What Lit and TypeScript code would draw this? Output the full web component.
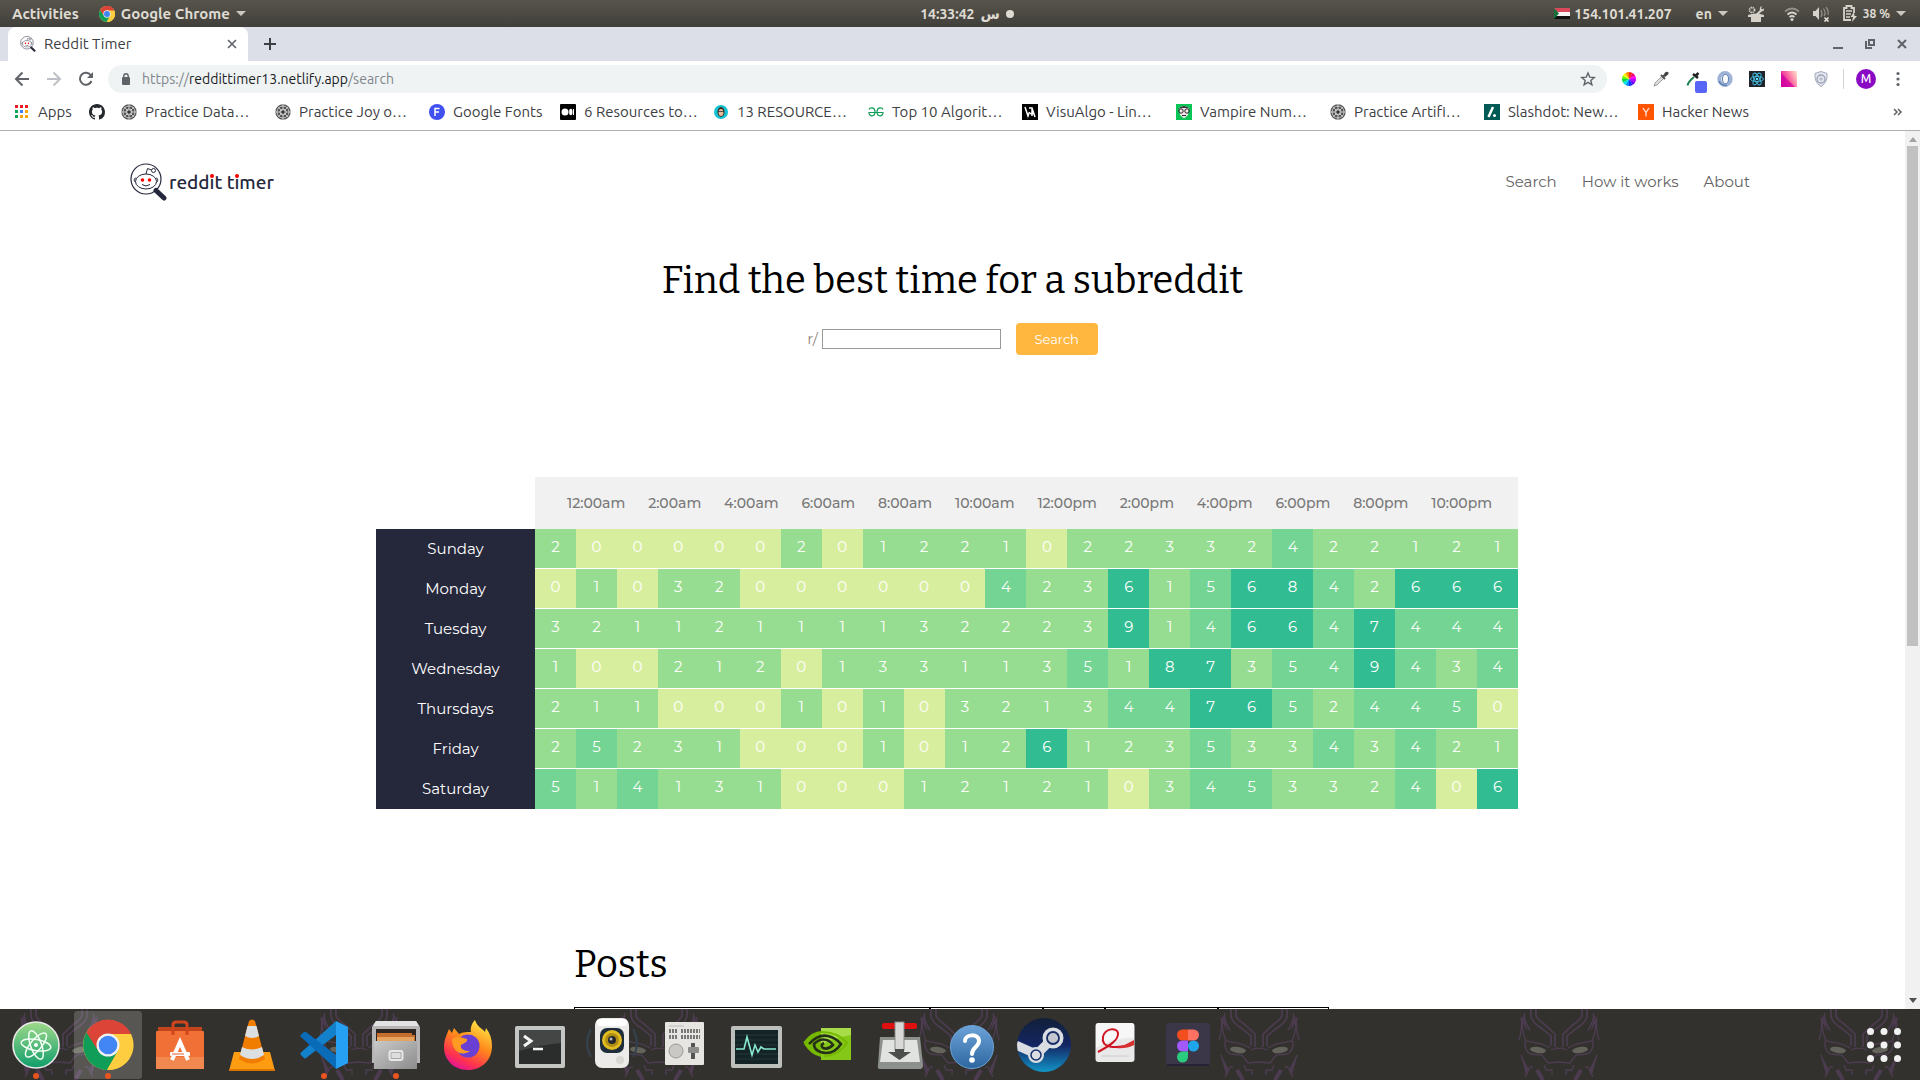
import { LitElement, html, svg, css, TemplateResult } from "lit";
import { customElement, property } from "lit/decorators.js";

const icon = (w: number, h: number, body: TemplateResult, box = `0 0 ${w} ${h}`) =>
  html`<svg width=${w} height=${h} viewBox=${box} aria-hidden="true">${body}</svg>`;

/* ---------- shared artwork ---------- */

const chromeLogo = svg`
  <circle cx="25" cy="25" r="25" fill="#ffcd40"/>
  <path d="M4.500 11 A25 25 0 0 0 24 50 L35 31 L25 25 L14 28Z" fill="#0f9d58"/>
  <path d="M24 50 A25 25 0 0 0 48 14 L25 14 L35.500 30Z" fill="#ffcd40"/>
  <path d="M3.500 12.500 A25 25 0 0 1 48 14 L25 14 L14 29Z" fill="#db4437"/>
  <circle cx="25" cy="25" r="11.500" fill="#f1f1f1"/>
  <circle cx="25" cy="25" r="9.300" fill="#4285f4"/>`;

const alien = svg`
  <g fill="none" stroke="#25283c" stroke-width="1">
    <ellipse cx="16" cy="18.500" rx="10.500" ry="7.500"/>
    <path d="M6.500 15.500 C4 14 3.500 18 5.500 19.500 M25.500 15.500 C28 14 28.500 18 26.500 19.500"/>
    <path d="M16 11 L17.500 5.500 L21.500 7"/>
    <circle cx="23.500" cy="7.500" r="2"/>
    <path d="M12 21.500 Q16 24.500 20 21.500"/>
  </g>
  <circle cx="12.500" cy="17" r="1.800" fill="#fe0000"/>
  <circle cx="19.500" cy="17" r="1.800" fill="#fe0000"/>`;

const magnifier = svg`
  <circle cx="16" cy="16" r="15" fill="#fff" stroke="#25283c" stroke-width="1.200"/>
  ${alien}
  <path d="M26 27.500 L34 35" stroke="#25283c" stroke-width="5" stroke-linecap="round"/>`;

/* ---------- bookmarks ---------- */

const acm = svg`
  <circle cx="8" cy="8" r="7.700" fill="#555"/>
  <g fill="none" stroke="#ddd" stroke-width="0.800">
    <circle cx="8" cy="8" r="6"/><circle cx="8" cy="8" r="3"/>
    <path d="M8 0 V16 M0 8 H16 M2.500 2.500 L13.500 13.500 M13.500 2.500 L2.500 13.500"/>
  </g><circle cx="8" cy="8" r="1.500" fill="#333"/>`;

const github = svg`<path fill="#24292e" fill-rule="evenodd" d="M8 0C3.580 0 0 3.580 0 8c0 3.540 2.290 6.530 5.470 7.590.4.070.55-.17.55-.38 0-.19-.01-.82-.01-1.490-2.010.37-2.530-.49-2.690-.94-.09-.23-.48-.94-.82-1.130-.28-.15-.68-.52-.01-.53.63-.01 1.080.58 1.230.82.72 1.210 1.870.87 2.330.66.070-.52.28-.87.51-1.070-1.780-.2-3.640-.89-3.640-3.950 0-.87.31-1.590.82-2.150-.08-.2-.36-1.020.08-2.120 0 0 .67-.21 2.200.82.64-.18 1.320-.27 2-.27s1.360.09 2 .27c1.530-1.040 2.200-.82 2.200-.82.44 1.100.16 1.920.08 2.120.51.56.82 1.270.82 2.150 0 3.070-1.870 3.750-3.650 3.950.29.25.54.73.54 1.480 0 1.070-.01 1.930-.01 2.200 0 .21.15.46.55.38A8.010 8.010 0 0 0 16 8c0-4.420-3.580-8-8-8z"/>`;

const apps = svg`${["#ea1b23", "#ea1b23", "#ea1b23", "#10a457", "#3f7ff5", "#f7a70b", "#10a457", "#f7a70b", "#f7a70b"].map(
  (c, i) => svg`<rect x=${(i % 3) * 5} y=${1 + Math.floor(i / 3) * 5} width="3" height="3" fill=${c}/>`)}`;

const bookmarks: { label: string; size: string; art: TemplateResult }[] = [
  { label: "Apps", size: "short", art: apps },
  { label: "", size: "bare", art: github },
  { label: "Practice Data…", size: "long", art: acm },
  { label: "Practice Joy o…", size: "long", art: acm },
  { label: "Google Fonts", size: "medium", art: svg`<circle cx="8" cy="8" r="8" fill="#4150f0"/><path d="M6 12 V4.500 H10.500 M6 8 H10" fill="none" stroke="#fff" stroke-width="1.500"/>` },
  { label: "6 Resources to…", size: "long", art: svg`<rect width="16" height="16" rx="1" fill="#000"/><circle cx="5" cy="8" r="3.500" fill="#fff"/><ellipse cx="10.800" cy="8" rx="1.700" ry="3.300" fill="#fff"/><rect x="13" y="5" width="1" height="6" fill="#fff"/>` },
  { label: "13 RESOURCE…", size: "long", art: svg`<circle cx="7" cy="8" r="7" fill="#13c3d3"/><ellipse cx="7" cy="8" rx="3.500" ry="5" fill="#3c3028"/><ellipse cx="7" cy="8.500" rx="2.400" ry="3.500" fill="#e3bd9d"/><path d="M4 7.500H10" stroke="#333" stroke-width="0.800"/>` },
  { label: "Top 10 Algorit…", size: "long", art: svg`<g fill="none" stroke="#0f9d58" stroke-width="1.200"><path d="M1 5.500 C2 3 7 3 7 8 C7 13 1 13 1 8.500 H15 C15 13 9 13 9 8 C9 3 14 3 15 5.500"/></g>` },
  { label: "VisuAlgo - Lin…", size: "long", art: svg`<rect width="16" height="16" fill="#000"/><path d="M3 3 L6 12 L7.500 8 M7 4 H10 L13 13 M10 4 V12 M8 9.500 H12" fill="none" stroke="#fff" stroke-width="1.500"/>` },
  { label: "Vampire Num…", size: "long", art: svg`<rect width="16" height="16" fill="#07c557"/><path d="M3 4 Q8 0 13 4 L12 11 L8 14.500 L4 11Z" fill="#f4e9ec"/><path d="M2 5 Q8 -1 14 5 L11.500 4 H5Z" fill="#333"/><g fill="none" stroke="#222"><circle cx="5" cy="7" r="2.200"/><circle cx="11" cy="7" r="2.200"/><path d="M6 11.500H10"/></g>` },
  { label: "Practice Artifi…", size: "long", art: acm },
  { label: "Slashdot: New…", size: "long", art: svg`<rect width="16" height="16" fill="#015a55"/><path d="M9 3 L4.500 13" stroke="#fff" stroke-width="2.500"/><circle cx="10.500" cy="11.500" r="1.500" fill="#fff"/>` },
  { label: "Hacker News", size: "long", art: svg`<rect width="16" height="16" fill="#ff5500"/><path d="M5 4 L8 8.500 L11 4 M8 8.500 V12.500" fill="none" stroke="#ffe4d4" stroke-width="1.300"/>` },
];

/* ---------- browser extensions ---------- */

const hues = ["#f0f", "#f0006a", "#f22", "#ff8a00", "#fff200", "#6bff00", "#00d84a", "#00e5e5", "#008cff", "#1030ff", "#6a00ff", "#b400ff"];
const wheel = svg`${hues.map((_, i) => {
  const at = (k: number) => `${8 + 7 * Math.sin((k * Math.PI) / 6)} ${8 - 7 * Math.cos((k * Math.PI) / 6)}`;
  return svg`<path d=${`M8 8 L${at(i)} A7 7 0 0 1 ${at(i + 1)}Z`} fill=${hues[(14 - i) % 12]}/>`;
})}`;

const extensions: { name: string; art: TemplateResult }[] = [
  { name: "Colour wheel", art: wheel },
  { name: "Eyedropper", art: svg`<path d="M1 15 L2 12 L9 5 L11 7 L4 14Z" fill="#ddd" stroke="#888" stroke-width="0.800"/><path d="M8 4 L12 8 M10 5.500 L13.500 2.500" stroke="#555" stroke-width="2"/><path d="M10.500 4.500 L12 1.500 Q14 0 15.500 1.500 Q16 3 14.500 4 L12 6Z" fill="#444"/>` },
  { name: "Colour picker", art: svg`<path d="M2.500 14.500 Q3 11 9 6" fill="none" stroke="#1f8050" stroke-width="2"/><path d="M8 3 L13 7 M10 5.500 L13.500 2" stroke="#222" stroke-width="2.500"/><rect x="10" y="10" width="12" height="12" rx="2" fill="#5865f7"/>` },
  { name: "Ring", art: svg`<ellipse cx="8" cy="8" rx="5.700" ry="6" fill="none" stroke="#9db4d8" stroke-width="4"/><ellipse cx="8.500" cy="8" rx="3" ry="4.500" fill="#fff" stroke="#5f7eb0" stroke-width="1"/><path d="M2 10 Q4 15 10 14.500" fill="none" stroke="#6483b5" stroke-width="1.500"/>` },
  { name: "React", art: svg`<rect width="16" height="16" fill="#20232a"/><g fill="none" stroke="#3fb7d8" stroke-width="1"><ellipse cx="8" cy="8" rx="6.500" ry="2.600"/><ellipse cx="8" cy="8" rx="6.500" ry="2.600" transform="rotate(60 8 8)"/><ellipse cx="8" cy="8" rx="6.500" ry="2.600" transform="rotate(120 8 8)"/></g><circle cx="8" cy="8" r="1.300" fill="#61dafb"/>` },
  { name: "Gradient", art: svg`<defs><linearGradient id="pk" x1="0" y1="0.700" x2="1" y2="0.200"><stop offset="0" stop-color="#d1009c"/><stop offset="0.500" stop-color="#fb62a0"/><stop offset="1" stop-color="#ffd9c4"/></linearGradient></defs><rect width="16" height="16" fill="url(#pk)"/><path d="M0 2 L14 16 H0Z" fill="#d000a0" opacity="0.700"/>` },
  { name: "Shield", art: svg`<path d="M8 0.500 L14 2.500 Q15 11 8 15.500 Q1 11 2 2.500Z" fill="#e4e7ef" stroke="#a3a9ba"/><circle cx="8" cy="8" r="4" fill="none" stroke="#9ba3b8" stroke-width="1.300"/><circle cx="8" cy="8" r="1.700" fill="#b8bece"/>` },
];

/* ---------- dock ---------- */

const orbit = (a: number) => svg`<ellipse cx="24" cy="24" rx="15" ry="5.500" transform=${`rotate(${a} 24 24)`}/>`;

const dock: { name: string; running?: boolean; active?: boolean; art: TemplateResult }[] = [
  { name: "Atom", running: true, art: svg`
    <defs><linearGradient id="at" x1="0" y1="0" x2="0" y2="1"><stop offset="0" stop-color="#9fd98a"/><stop offset="1" stop-color="#0f9d6b"/></linearGradient></defs>
    <circle cx="24" cy="24" r="23" fill="url(#at)" stroke="#e8e8e8" stroke-width="1.600"/>
    <g fill="none" stroke="#f2fff4" stroke-width="1.500">${orbit(10)}${orbit(70)}${orbit(130)}</g><circle cx="24" cy="24" r="2" fill="#fff"/>` },
  { name: "Google Chrome", running: true, active: true, art: svg`<g transform="translate(-1 -1)">${chromeLogo}</g>` },
  { name: "Software", art: svg`
    <path d="M17 13 V4 Q17 1 20 1 H28 Q31 1 31 4 V13" fill="none" stroke="#d0451b" stroke-width="3"/>
    <path d="M2 6 H46 V12 H2Z" fill="#c2441d"/><rect x="0" y="10" width="48" height="38" rx="1" fill="#f07036"/><rect x="0" y="36" width="48" height="12" fill="#f08850"/>
    <path d="M17 6 V14 M31 6 V14" stroke="#d0451b" stroke-width="3"/>
    <path d="M16 39 L24 21 L32 39" fill="none" stroke="#fff" stroke-width="4"/><rect x="14" y="31" width="20" height="4" rx="1" fill="#fff"/><path d="M16 33H28" stroke="#e65f2a" stroke-width="1"/>` },
  { name: "VLC", art: svg`
    <path d="M6 31 H42 L47 50 H1Z" fill="#ff9c12"/><path d="M1 48H47V50H1Z" fill="#d97400"/>
    <path d="M11 38 Q24 47 37 38 L27 0 Q24 -3 21 0Z" fill="#f07c00"/>
    <path d="M19.500 5 H28.500 L31 15 Q24 19 17 15Z" fill="#dcdfe2"/><path d="M14 26 Q24 31 34 26 L36 34 Q24 42 12 34Z" fill="#dcdfe2"/>` },
  { name: "Visual Studio Code", running: true, art: svg`
    <path d="M36 0 L36 14 L6 37 Q5 38 4 37 L0.500 33.500 Q0 32.500 1 31.500Z" fill="#1380cc"/>
    <path d="M36 48 V34 L6 11 Q5 10.500 4 11 L0.500 14 Q0 15 1 16Z" fill="#0a6bb8"/>
    <path d="M36 0 L48 6 V42 L36 48Z" fill="#26a0f2"/>` },
  { name: "Files", running: true, art: svg`
    <defs><linearGradient id="fl" x1="0" y1="0" x2="1" y2="1"><stop offset="0" stop-color="#c9c9c9"/><stop offset="1" stop-color="#8c8c8c"/></linearGradient></defs>
    <path d="M4 0 H44 L48 6 V42 H0 V6Z" fill="#b5b5b5"/><path d="M4 0 H44 L47 5 H1Z" fill="#e2e2e2"/><rect x="4" y="8" width="40" height="12" fill="#2b2420"/>
    <path d="M5 12 H40 V14 H43 V21 H5Z" fill="#c46f2e"/><path d="M5 16 H42 V21 H5Z" fill="#e5a35f"/>
    <rect x="2" y="20" width="43" height="28" fill="url(#fl)"/><rect x="17.500" y="30" width="13" height="9" rx="2" fill="none" stroke="#e8e8e8" stroke-width="2"/><rect x="19.500" y="32" width="9" height="5" fill="#ddd"/>` },
  { name: "Firefox", art: svg`
    <defs><linearGradient id="ff" x1="0.800" y1="0" x2="0.300" y2="1"><stop offset="0" stop-color="#fff04a"/><stop offset="0.450" stop-color="#ff8a1a"/><stop offset="0.800" stop-color="#ff3150"/><stop offset="1" stop-color="#e0139a"/></linearGradient></defs>
    <path d="M24 49 C9 49 0 38 0 26 C0 19 3 13 5 8 L8 12 L10 7 L15 13 C19 11 23 11 27 11 C26 7 28 2 31 -1 C33 6 38 7 41 11 L42 7 C46 12 48 18 48 25 C48 39 38 49 24 49Z" fill="url(#ff)"/>
    <circle cx="24" cy="25" r="11.500" fill="#6a3fd4"/>
    <path d="M8 18 C13 14 19 17 23 18 C24 21 20 22 17 24 C16 28 20 30 26 30 C20 35 8 33 8 18Z" fill="#ff9a22"/>` },
  { name: "Terminal", art: svg`
    <rect x="-1" y="5" width="50" height="42" rx="2" fill="#c4c6c4"/><rect x="3" y="9" width="42" height="34" fill="#2b2d2c"/><path d="M3 9H45V22Q24 24 3 30Z" fill="#434645"/>
    <path d="M8 15 L15 20 L8 25" fill="none" stroke="#f4f4f4" stroke-width="3"/><path d="M17 28H27" stroke="#f4f4f4" stroke-width="2.500"/>` },
  { name: "Rhythmbox", art: svg`
    <path d="M3 8 Q-5 22 3 36 M45 8 Q53 22 45 36" fill="none" stroke="#34424f" stroke-width="2"/>
    <rect x="7" y="-3" width="34" height="50" rx="7" fill="#ecebe9"/><rect x="9" y="-2" width="30" height="7" rx="3" fill="#fff"/>
    <rect x="12" y="7" width="24" height="25" rx="7" fill="#1f2c3c"/><circle cx="24" cy="19" r="10" fill="#e0bb22"/><circle cx="24" cy="19" r="7" fill="#b08e14"/><circle cx="24" cy="19" r="4" fill="#24262c"/><circle cx="23" cy="18" r="1.500" fill="#bbb"/><circle cx="32" cy="39" r="4" fill="#d9d7d4"/>` },
  { name: "Tweaks", art: svg`
    <rect x="5" y="1" width="39" height="43" rx="1" fill="#e6e5e1"/><path d="M9 5H24" stroke="#bbb"/>
    <path d="M9 10H17M21 10H40M9 16H17M21 16H40" stroke="#777" stroke-width="4" stroke-dasharray="2 1"/>
    <circle cx="16" cy="30" r="7" fill="#c9c8c4" stroke="#9b9a96"/><path d="M33 22V38" stroke="#555" stroke-width="4"/><rect x="28" y="26" width="11" height="6" rx="1" fill="#8d8d8b"/>` },
  { name: "System Monitor", art: svg`
    <rect x="-1" y="5" width="51" height="42" rx="2" fill="#bdbfbd"/><rect x="3" y="9" width="43" height="34" fill="#142326"/>
    <path d="M3 14H46M3 19H46M3 24H46M3 33H46M3 38H46" stroke="#24383c"/>
    <path d="M4 28 H12 L15 16 L20 34 L23 24 L26 31 L29 26 L32 28 H44" fill="none" stroke="#86e8cf" stroke-width="1.600"/>` },
  { name: "NVIDIA", art: svg`
    <rect x="17" y="7" width="30" height="32" fill="#85c818"/><path d="M17 7H47V14Q32 16 17 24Z" fill="#a8dd4a"/>
    <path d="M0 23 Q8 11 17 11 V36 Q7 34 0 23Z" fill="#76b900"/><path d="M17 7V39" stroke="#33312d" stroke-width="0"/>
    <path d="M0 22 Q8 11 18 11 Q34 11 43 22 Q34 35 20 35" fill="none" stroke="#76b900" stroke-width="2"/>
    <path d="M5 23 Q14 13 24 15 Q32 17 37 23 Q31 32 22 32 Q10 31 10 23 Q17 16 25 20 Q28 22 29 24 Q24 29 19 27 Q16 24 20 22" fill="none" stroke="#253018" stroke-width="2.600"/>` },
  { name: "Transmission", art: svg`
    <path d="M4 16 H44 L47 44 Q47 48 44 48 H4 Q1 48 2 44Z" fill="#8d918d"/><path d="M7 19 H41 L44 41 H4Z" fill="#e1e3e1"/>
    <rect x="6" y="2" width="35" height="6" rx="2" fill="#e01010"/><rect x="19" y="1" width="9" height="28" fill="#d9dad8" stroke="#8a8c8a"/>
    <path d="M12 31 L23.500 39 L35 31 H28 V28 H19 V31Z" fill="#4b4e4b"/>` },
  { name: "Help", art: svg`
    <defs><linearGradient id="hp" x1="0" y1="0" x2="0" y2="1"><stop offset="0" stop-color="#6ca2d8"/><stop offset="1" stop-color="#2d679f"/></linearGradient></defs>
    <circle cx="24" cy="26" r="21.500" fill="url(#hp)" stroke="#6aa3d6"/>
    <path d="M17 20 C17 13 31 12 31 20 C31 26 24 26 24 33" fill="none" stroke="#fff" stroke-width="4" stroke-linecap="round"/><circle cx="24" cy="39" r="2.800" fill="#fff"/>` },
  { name: "Steam", art: svg`
    <defs><linearGradient id="st" x1="0" y1="0" x2="0" y2="1"><stop offset="0" stop-color="#122038"/><stop offset="0.500" stop-color="#132563"/><stop offset="1" stop-color="#1295c8"/></linearGradient><clipPath id="stc"><circle cx="24" cy="24" r="27"/></clipPath></defs>
    <circle cx="24" cy="24" r="27" fill="url(#st)"/>
    <g clip-path="url(#stc)"><path d="M-4 24 L16 33" stroke="#dadde2" stroke-width="9"/><path d="M33 17 L16 34" stroke="#dadde2" stroke-width="9"/><circle cx="33" cy="17" r="10.500" fill="#dadde2"/><circle cx="33" cy="17" r="6" fill="#c4c7cf" stroke="#182c66" stroke-width="1.800"/><circle cx="16" cy="34" r="8" fill="#dadde2"/><circle cx="16" cy="34" r="5" fill="none" stroke="#17306c" stroke-width="1.500"/></g>` },
  { name: "Document Viewer", art: svg`
    <rect x="3.500" y="2" width="39" height="39" rx="3" fill="#e9e9e9"/><path d="M4 5Q4 2 7 2H39Q42 2 42 5V17Q24 15 4 27Z" fill="#f7f7f7"/><path d="M9 35H37" stroke="#ccc"/>
    <path d="M6 31 C17 25 27 19 26 12 C25 6 13 7 11 16 C9 26 21 29 41 23" fill="none" stroke="#d01522" stroke-width="2"/><path d="M24 27 Q34 24 42 19 V24 Q34 28 24 27Z" fill="#d83030"/>` },
  { name: "Figma", art: svg`
    <rect x="2" y="2" width="44" height="43" rx="3" fill="#3c3748"/><rect x="3" y="43" width="42" height="2" fill="#272233"/>
    <path d="M24 8.500H18.500a5.500 5.500 0 0 0 0 11H24Z" fill="#f24e1e"/><path d="M24 8.500H29.500a5.500 5.500 0 0 1 0 11H24Z" fill="#ff7262"/>
    <path d="M24 19.500H18.500a5.500 5.500 0 0 0 0 11H24Z" fill="#a259ff"/><circle cx="29.500" cy="25" r="5.500" fill="#1fa5ea"/><path d="M24 30.500H18.500a5.500 5.500 0 1 0 5.500 5.500Z" fill="#29cc7f"/>` },
];

const maskHalf = svg`
  <path d="M-28 0 V8 Q-26 14 -18 19 L-8 27 V37 M-23 0 V7 Q-21 11 -15 15 L-4 25 V38" stroke-width="1.600"/>
  <path d="M-38 8 Q-36 18 -40 31 M-34 4 Q-40 16 -33 32 L-17 35 L-9 39 M-35 6 Q-33 16 -29 21"/>
  <path d="M-34 32 Q-35 42 -28 45 L-17 46 L-11 54 L0 53 M-8 41 L-2 39 L0 40"/>
  <path d="M-38 46 Q-35 56 -31 63 L-34 68 M-31 63 Q-30 57 -26 58 M-15 56 L-13 61 L-7 61 V66"/>
  <path d="M-38 46 L-31 59 L-33 66Z M-35 8 L-32 22 L-36 14Z" fill="#4c3b51" stroke="none"/>
  <path d="M-22 61 L-16 71" stroke-width="4"/>
  <ellipse cx="-21" cy="41" rx="8" ry="3" fill="#65645c" stroke="none" transform="rotate(8 -21 41)"/>`;

/* ---------- elements ---------- */

@customElement("system-bar")
export class SystemBar extends LitElement {
  static styles = css`
    :host { display: block; font: 600 14px/20px Ubuntu, "Noto Sans", "DejaVu Sans", sans-serif; color: #dfdbd2; }
    .bar { display: grid; grid-template-columns: 1fr auto 1fr; align-items: center; height: 27px; padding: 0 14px 0 12px; background: linear-gradient(#57544c, #413f3a); }
    .group { display: flex; align-items: center; gap: 6px; }
    .left { gap: 20px; font-size: 15px; }
    .center { padding-left: 16px; }
    .right { justify-content: flex-end; gap: 20px; }
    .tray { gap: 13px; }
    .dot { width: 8px; height: 8px; border-radius: 50%; background: #dfdbd2; }
    .address { gap: 4px; margin-right: 4px; }
    .small { font-size: 12px; }
    button { display: flex; align-items: center; gap: 6px; padding: 0; border: 0; background: none; color: inherit; font: inherit; }
    svg { display: block; flex: none; }
  `;
  render() {
    const caret = icon(10, 6, svg`<path d="M0 0H10L5 5Z" fill="#ccc8c0"/>`);
    return html`<div class="bar">
      <div class="group left">
        <button>Activities</button>
        <button>${icon(16, 16, chromeLogo, "0 0 50 50")}Google Chrome ${caret}</button>
      </div>
      <div class="group center"><time>14:33:42</time><span lang="ar">س</span><span class="dot"></span></div>
      <div class="group right">
        <span class="group address">${icon(16, 11, svg`<rect width="16" height="4" fill="#d9495b"/><rect y="4" width="16" height="4" fill="#f3f3f3"/><rect y="8" width="16" height="3" fill="#111"/><path d="M0 0 L5 5.500 L0 11Z" fill="#15713a"/>`)}154.101.41.207</span>
        <button>en ${caret}</button>
        ${icon(16, 16, svg`<g fill="#d6d2ca"><path d="M0 9 Q8 6 16 9 V11 H13 V16 H3 V11 H0Z"/><circle cx="4" cy="4" r="2.500" fill="none" stroke="#d6d2ca" stroke-width="1.800" stroke-dasharray="1.300 0.700"/><path d="M8 8 L12 4 Q11 1 14 0 L13 2.500 L15 3.500 L16 2 Q17 5 13.500 5.500 L11 8Z"/></g>`)}
        <div class="group tray">
          ${icon(16, 14, svg`<g fill="none" stroke="#d6d2ca" stroke-width="1.800"><path d="M1 4.500 Q8 -1.500 15 4.500" opacity="0.500"/><path d="M3.500 7.500 Q8 3.500 12.500 7.500"/><path d="M5.500 10 Q8 8 10.500 10"/></g><circle cx="8" cy="12.500" r="1.500" fill="#d6d2ca"/>`)}
          ${icon(17, 16, svg`<path d="M0 5H2.500L6 1V14L2.500 10H0Z" fill="#d6d2ca"/><path d="M8 4Q10 7.500 8 11M10.500 2.500Q13.500 7 11 10M13 1Q16 5 15 9" fill="none" stroke="#8e8a82" stroke-width="1.300"/><path d="M11.500 11.500L15.500 15.500M15.500 11.500L11.500 15.500" stroke="#e8e4dc" stroke-width="1.600"/>`)}
          <button>${icon(14, 17, svg`<path d="M8 15H1V3H3.500V1H8.500V3H11V8" fill="none" stroke="#d6d2ca" stroke-width="1.800"/><path d="M3 6H9M3 9H8M3 12H7" stroke="#d6d2ca" stroke-width="1.500"/><path d="M11 7L7.500 12H10L9 17L14 11H11.500Z" fill="#d6d2ca"/>`)}<span class="small">38 %</span>${caret}</button>
        </div>
      </div>
    </div>`;
  }
}

@customElement("browser-chrome")
export class BrowserChrome extends LitElement {
  static styles = css`
    :host { display: block; font: 400 15px/20px Ubuntu, "Noto Sans", sans-serif; color: #3c4043; }
    svg { display: block; flex: none; overflow: visible; }
    button { display: grid; place-items: center; padding: 0; border: 0; background: none; color: inherit; }
    .strip { display: flex; height: 34px; padding-left: 8px; background: #dcdfe7; }
    .tab { display: flex; align-items: center; gap: 8px; width: 240px; padding: 0 12px; box-sizing: border-box; background: #fff; border-radius: 8px 8px 0 0; }
    .title { flex: 1; }
    .new { width: 44px; }
    .window { display: flex; gap: 22px; margin-left: auto; padding-right: 13px; }
    .toolbar { display: flex; align-items: center; height: 36px; background: #fff; }
    .arrows { display: flex; width: 108px; padding-left: 14px; box-sizing: border-box; gap: 16px; }
    .omnibox { flex: 1; display: flex; align-items: center; gap: 10px; height: 28px; padding: 0 12px; border-radius: 14px; background: #eff3f4; font-size: 14px; }
    .url { flex: 1; display: flex; color: #80868b; }
    .host { color: #202124; }
    .extensions { display: flex; align-items: center; gap: 16px; padding: 0 16px 0 14px; }
    .extensions .rule { width: 1px; height: 20px; background: #d0d3d8; margin: 0 -4px 0 -2px; }
    .avatar { width: 20px; height: 20px; border-radius: 50%; background: #8a0bc4; color: #fff; font: 500 12px/20px Ubuntu, "Noto Sans", sans-serif; }
    .bookmarks { display: flex; align-items: center; height: 29px; padding: 0 18px 4px 15px; background: #fff; border-bottom: 1px solid #b0b0b0; }
    .bookmark { display: flex; align-items: center; gap: 8px; box-sizing: border-box; color: inherit; text-decoration: none; white-space: nowrap; }
    .bare { width: 32px; } .short { width: 74px; } .medium { width: 131px; } .long { width: 154px; }
    .more { margin-left: auto; }
  `;
  render() {
    return html`
      <div class="strip">
        <div class="tab">${icon(16, 16, magnifier, "0 0 37 38")}<span class="title">Reddit Timer</span>
          <button aria-label="Close tab">${icon(8, 8, svg`<path d="M0 0L8 8M8 0L0 8" stroke="#5f6368" stroke-width="1.600"/>`)}</button></div>
        <button class="new" aria-label="New tab">${icon(12, 12, svg`<path d="M6 0V12M0 6H12" stroke="#3c4043" stroke-width="2"/>`)}</button>
        <div class="window">
          <button aria-label="Minimise">${icon(10, 10, svg`<path d="M0 9H10" stroke="#5f6368" stroke-width="2"/>`)}</button>
          <button aria-label="Restore">${icon(10, 10, svg`<path d="M4 1H9V6H4Z M1 2V9H7" fill="none" stroke="#5f6368" stroke-width="2"/>`)}</button>
          <button aria-label="Close">${icon(10, 10, svg`<path d="M1 1L9 9M9 1L1 9" stroke="#5f6368" stroke-width="2"/>`)}</button>
        </div>
      </div>
      <div class="toolbar">
        <div class="arrows">
          <button aria-label="Back">${icon(16, 16, svg`<path d="M15 8H2.500M8.500 1.500L2 8L8.500 14.500" fill="none" stroke="#5f6368" stroke-width="2"/>`)}</button>
          <button aria-label="Forward">${icon(16, 16, svg`<path d="M1 8H13.500M7.500 1.500L14 8L7.500 14.500" fill="none" stroke="#bdc1c6" stroke-width="2"/>`)}</button>
          <button aria-label="Reload">${icon(16, 16, svg`<path d="M13.500 10A6 6 0 1 1 13 4.500" fill="none" stroke="#5f6368" stroke-width="2"/><path d="M15 1V7H9Z" fill="#5f6368"/>`)}</button>
        </div>
        <div class="omnibox">
          ${icon(12, 12, svg`<rect x="2" y="4" width="8" height="8" rx="1" fill="#5f6368"/><path d="M3.800 5V3A2.200 2.200 0 0 1 8.200 3V5" fill="none" stroke="#5f6368" stroke-width="1.400"/>`)}
          <div class="url"><span>https://</span><span class="host">reddittimer13.netlify.app</span><span>/search</span></div>
          <button aria-label="Bookmark this page">${icon(14, 14, svg`<path d="M7 1L8.800 5.200L13.200 5.500L9.800 8.400L10.900 12.800L7 10.400L3.100 12.800L4.200 8.400L0.800 5.500L5.200 5.200Z" fill="none" stroke="#5f6368" stroke-width="1.400"/>`)}</button>
        </div>
        <div class="extensions">
          ${extensions.map((e) => html`<button aria-label=${e.name}>${icon(16, 16, e.art)}</button>`)}
          <span class="rule"></span>
          <button class="avatar">M</button>
          <button aria-label="Menu">${icon(12, 14, svg`<g fill="#5f6368"><circle cx="6" cy="1.500" r="1.600"/><circle cx="6" cy="7" r="1.600"/><circle cx="6" cy="12.500" r="1.600"/></g>`)}</button>
        </div>
      </div>
      <nav class="bookmarks">
        ${bookmarks.map((b) => html`<a class="bookmark ${b.size}" href="#">${icon(b.label === "13 RESOURCE…" || b.label === "Apps" ? 15 : 16, 16, b.art)}${b.label}</a>`)}
        <button class="more" aria-label="More bookmarks">${icon(9, 8, svg`<path d="M1 1L4 4L1 7M5 1L8 4L5 7" fill="none" stroke="#5f6368" stroke-width="1.500"/>`)}</button>
      </nav>`;
  }
}

const DAYS = ["Sunday", "Monday", "Tuesday", "Wednesday", "Thursdays", "Friday", "Saturday"];
const HOURS = ["12:00am", "2:00am", "4:00am", "6:00am", "8:00am", "10:00am", "12:00pm", "2:00pm", "4:00pm", "6:00pm", "8:00pm", "10:00pm"];
const COUNTS = [
  "200000201221022332422121",
  "010320000004236156842666",
  "321121111322239146647444",
  "100212013311351873549434",
  "211000101032134476524450",
  "252310001012612353343421",
  "514131000121210345332406",
];

@customElement("heat-map")
export class HeatMap extends LitElement {
  @property({ attribute: false }) counts: string[] = COUNTS;
  static styles = css`
    :host { display: block; font: 400 15px/20px Montserrat, Inter, "Liberation Sans", sans-serif; color: #fff; }
    table { width: 100%; border-collapse: separate; border-spacing: 0; table-layout: fixed; }
    th, td { padding: 0; font-weight: 400; text-align: center; }
    .corner { width: 159px; }
    .hours { height: 52px; background: #f1f1f1; }
    .scale { display: flex; justify-content: space-between; padding: 0 26px 0 32px; font-size: 14px; font-weight: 500; color: #787878; }
    .day { height: 40px; background: #25273b; }
    .cell { height: 35px; padding-bottom: 4px; border-bottom: 1px solid #fff; }
    tr:last-child .cell { padding-bottom: 5px; border-bottom: 0; }
    .l0 { background: #d8ee9f; } .l1 { background: #97dd91; } .l2 { background: #74d493; } .l3 { background: #32bc92; }
  `;
  private level(n: number) {
    return n === 0 ? "l0" : n < 4 ? "l1" : n < 6 ? "l2" : "l3";
  }
  render() {
    return html`<table>
      <thead><tr><td class="corner"></td>
        <th class="hours" colspan="24" scope="colgroup"><div class="scale">${HOURS.map((h) => html`<span>${h}</span>`)}</div></th></tr></thead>
      <tbody>${this.counts.map((row, i) => html`<tr><th class="day" scope="row">${DAYS[i]}</th>
        ${[...row].map((n) => html`<td class="cell ${this.level(+n)}">${n}</td>`)}</tr>`)}</tbody>
    </table>`;
  }
}

@customElement("timer-page")
export class TimerPage extends LitElement {
  static styles = css`
    :host { display: flex; min-height: 0; overflow: hidden; background: #fff; font: 400 15px/20px Montserrat, Inter, "Liberation Sans", sans-serif; }
    .page { flex: 1; min-width: 0; display: flex; flex-direction: column; align-items: center; }
    .page > * { flex: none; }
    header { display: flex; align-items: center; justify-content: space-between; align-self: stretch; height: 40px; padding: 31px 155px 0 130px; }
    .logo { display: flex; align-items: center; gap: 2px; color: #25283c; font: 500 19px/24px Ubuntu, "Noto Sans", sans-serif; text-decoration: none; }
    .logo svg { display: block; }
    .i { position: relative; }
    .i::before { content: ""; position: absolute; left: calc(50% - 2px); top: 3px; width: 4px; height: 4px; border-radius: 50%; background: #fe0000; }
    nav { display: flex; gap: 25px; }
    nav a { color: #636363; text-decoration: none; }
    h1, h2 { margin: 0; color: #000; font: 400 38px/48px Bitter, "DejaVu Serif Condensed", "DejaVu Serif", serif; }
    h1 { margin-top: 54px; }
    form { display: flex; align-items: center; gap: 4px; margin-top: 19px; color: #93867c; }
    input { width: 179px; height: 20px; box-sizing: border-box; border: 1px solid #999; padding: 1px 4px; font: inherit; }
    form button { margin-left: 11px; width: 82px; height: 32px; padding: 0; border: 0; border-radius: 4px; background: #ffb740; color: #fff; font: 400 13px/20px Montserrat, Inter, sans-serif; }
    heat-map { width: 60%; max-width: 1142px; margin: 122px 11px 0 0; }
    .posts { width: 755px; max-width: 90%; margin: 131px 2px 0 0; }
    .list { width: 100%; margin-top: 19px; border: 1px solid #000; border-spacing: 0; table-layout: fixed; }
    .list th { height: 40px; padding: 0; box-sizing: border-box; border-right: 2px solid #000; }
    .list th:last-child { border-right: 0; }
    .title { width: 356px; } .time, .comments { width: 113px; } .score { width: 62px; }
    .scroll { display: flex; flex-direction: column; align-items: center; justify-content: space-between; width: 15px; padding: 6px 0; box-sizing: border-box; background: #f1f1f1; }
    .track { flex: 1; align-self: stretch; padding: 4px 2px; }
    .thumb { height: 59%; background: #c1c1c1; }
    .scroll svg { display: block; }
  `;
  render() {
    return html`
      <main class="page">
        <header>
          <a class="logo" href="#home">${icon(37, 38, magnifier)}<span>redd<span class="i">i</span>t t<span class="i">i</span>mer</span></a>
          <nav><a href="#search">Search</a><a href="#how">How it works</a><a href="#about">About</a></nav>
        </header>
        <h1>Find the best time for a subreddit</h1>
        <form><label for="sub">r/</label><input id="sub" type="text" /><button type="button">Search</button></form>
        <heat-map></heat-map>
        <section class="posts">
          <h2>Posts</h2>
          <table class="list"><tr><th class="title"></th><th class="time"></th><th class="score"></th><th class="comments"></th><th></th></tr></table>
        </section>
      </main>
      <div class="scroll">
        ${icon(8, 5, svg`<path d="M0 5L4 0L8 5Z" fill="#a3a3a3"/>`)}
        <div class="track"><div class="thumb"></div></div>
        ${icon(8, 5, svg`<path d="M0 0H8L4 5Z" fill="#505050"/>`)}
      </div>`;
  }
}

@customElement("app-dock")
export class AppDock extends LitElement {
  static styles = css`
    :host { position: relative; display: flex; align-items: center; gap: 4px; height: 71px; padding: 0 2px; box-sizing: border-box; background: #33312d; overflow: hidden; }
    .masks { position: absolute; inset: 0; width: 100%; height: 100%; }
    button { position: relative; display: grid; place-items: center; width: 68px; height: 68px; padding: 0; border: 0; border-radius: 3px; background: none; }
    .active { background: rgba(255, 255, 255, 0.18); }
    svg { display: block; overflow: visible; }
    .pip { position: absolute; bottom: 0; left: 31px; width: 6px; height: 6px; border-radius: 50%; background: #e95420; }
    .grid { margin-left: auto; }
  `;
  render() {
    return html`
      <svg class="masks" aria-hidden="true"><defs>
        <pattern id="mask" x="-91" y="0" width="300" height="71" patternUnits="userSpaceOnUse">
          <g fill="none" stroke="#4c3b51" stroke-width="1.300"><g transform="translate(150 0)">${maskHalf}</g><g transform="translate(150 0) scale(-1 1)">${maskHalf}</g></g>
        </pattern></defs><rect width="100%" height="71" fill="url(#mask)"/></svg>
      ${dock.map((d) => html`<button class=${d.active ? "active" : ""} aria-label=${d.name}>${icon(48, 48, d.art)}${d.running ? html`<span class="pip"></span>` : ""}</button>`)}
      <button class="grid" aria-label="Show applications">${icon(34, 34, svg`${[0, 1, 2, 3, 4, 5, 6, 7, 8].map(
        (i) => svg`<circle cx=${3.5 + (i % 3) * 13.5} cy=${3.5 + Math.floor(i / 3) * 13.5} r="3.500" fill="#f2f2f2"/>`)}`)}</button>`;
  }
}

@customElement("app-root")
export class AppRoot extends LitElement {
  static styles = css`
    :host { display: flex; flex-direction: column; height: 100vh; overflow: hidden; }
    timer-page { flex: 1; }
  `;
  render() {
    return html`<system-bar></system-bar><browser-chrome></browser-chrome><timer-page></timer-page><app-dock></app-dock>`;
  }
}
